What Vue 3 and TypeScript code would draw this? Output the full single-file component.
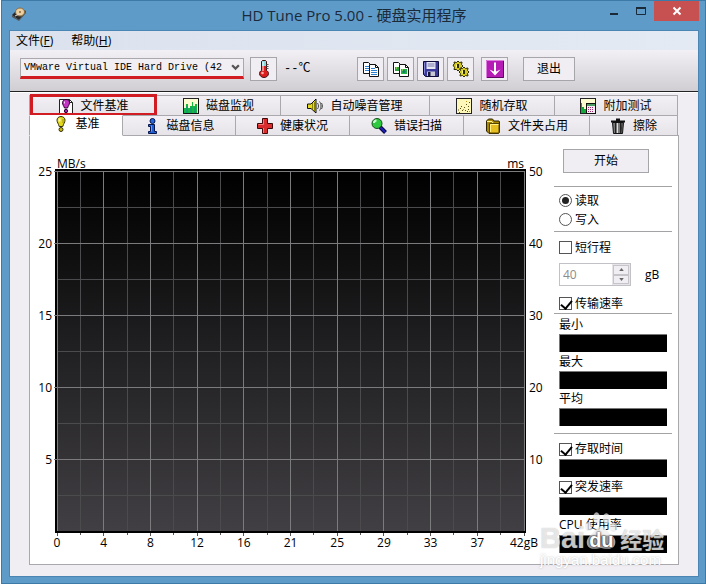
<script setup lang="ts">
import { ref } from 'vue'

interface Tab {
  label: string
  icon: string
  weight: number
  active?: boolean
  marked?: boolean
}

interface Tool {
  name: string
  icon: string
}

const icons: Record<string, string> = {
  fileBench:
    '<path d="M1.500 1.500h10l3 3v11h-13z" fill="#fff" stroke="#222"/><path d="M11.500 1.500v3h3" fill="none" stroke="#222"/><path d="M8 1.500c2.200 0 3.500 1.500 3.500 3.200 0 2-1.500 3.600-2 5.300h-3c-.5-1.700-2-3.300-2-5.300C4.500 3 5.800 1.500 8 1.500z" fill="#c433c4" stroke="#300030"/><path d="M6.500 3.500v2" stroke="#fbd0ff"/><circle cx="8" cy="13" r="1.700" fill="#a020a8" stroke="#300030"/>',
  monitor:
    '<rect x=".5" y=".5" width="15" height="15" fill="#fdfbd0" stroke="#222"/><path d="M1 10h2V6h2v4h2v-2h2V4h1v4h2V6h2v9H1z" fill="#14b83c"/><path d="M4 8v7M8 9v6M12 9v6" stroke="#1582a0"/><path d="M1 15.500h15M15.500 1v14" stroke="#111"/>',
  speaker:
    '<path d="M.5 6h3.500L9 1v14L4 10.500H.5z" fill="#e8dc20" stroke="#111"/><path d="M5.500 5v6M7.500 4v9" stroke="#8a8000"/><path d="M10.500 5c1.300 1.700 1.300 4.300 0 6M12.500 3.500c2 2.500 2 6.500 0 9M14.500 5c1.200 2 1.200 4 0 6" fill="none" stroke="#444"/>',
  random:
    '<rect x=".5" y=".5" width="15" height="15" fill="#fdf7ba" stroke="#222"/><path d="M2 12h1M4 10.500h1M6 12.500h1M5 8.500h1M8 9.500h1M9 12.500h1M10 6.500h1M12 8.500h1M13 4.500h1M12 11.500h1M3 14.500h1M11 13.500h1" stroke="#59501a"/><path d="M10 3.500h1M7 11.500h1M13 13.500h1" stroke="#c99b22"/>',
  extra:
    '<rect x=".5" y=".5" width="15" height="15" fill="#fdfbd0" stroke="#222"/><path d="M1 5h1v4h2v2h2v4H1z" fill="#14a83c"/><rect x="6.500" y="5.500" width="9" height="10" fill="#f8eef4" stroke="#111"/><path d="M7 7h8" stroke="#4c9b62" stroke-width="2"/><path d="M8 9.500h1m1 0h1m1 0h1M8 11.500h1m1 0h1m1 0h1M8 13.500h1m1 0h1m1 0h1" stroke="#a02870"/>',
  bulb:
    '<path d="M8 .5c2.500 0 4 1.700 4 3.700 0 2.300-1.600 3.500-2.200 6.300H6.200C5.600 7.700 4 6.500 4 4.200 4 2.200 5.500.5 8 .5z" fill="#e4d81c" stroke="#33300a"/><path d="M6.500 2.500v3" stroke="#fffac0" stroke-width="2"/><path d="M10 3v4" stroke="#9d9300"/><circle cx="8" cy="13.500" r="2" fill="#c9bd10" stroke="#33300a"/>',
  info:
    '<circle cx="8.500" cy="3" r="2.500" fill="#2468dc" stroke="#07154a"/><path d="M4.500 6.500h6v7h2v2h-8v-2h2v-5h-2z" fill="#1e5ed2" stroke="#07154a"/><path d="M7.500 7.500v6" stroke="#69a5ff"/>',
  health:
    '<path d="M5.500.5h5v5h5v5h-5v5h-5v-5h-5v-5h5z" fill="#d92c2c" stroke="#3f0808"/><path d="M6.500 1.500v5h-5M6.500 10v5" fill="none" stroke="#f57b72"/>',
  scan:
    '<path d="M9 9l5.500 5.500" stroke="#06063f" stroke-width="4"/><path d="M9.500 9.500l4.500 4.500" stroke="#2222b8" stroke-width="2"/><circle cx="6" cy="5.500" r="5" fill="#2fc93f" stroke="#174c1d"/><path d="M3 5c0-1.500 1-2.500 2.500-2.500" fill="none" stroke="#c9ffd0" stroke-width="2"/>',
  folder:
    '<path d="M1.500 3l2-2h4l1.500 2h5l.5 1v10l-1 1.500H4L1.500 13z" fill="#a98800" stroke="#2e2500"/><path d="M2 3.500h5l1 1.500" fill="none" stroke="#fff3a0"/><path d="M4.500 5.500h9.500v9.500H4.500z" fill="#e8bf20" stroke="#564500"/><path d="M5.500 14V6.500h8" fill="none" stroke="#fff08a"/>',
  trash:
    '<path d="M2.500 4.500h11l-1 11h-9z" fill="#777" stroke="#111"/><path d="M1 3.500h14M6 1.500h4" stroke="#111" stroke-width="2"/><path d="M5.500 5v10M10.500 5v10" stroke="#222"/><path d="M7.500 5v10" stroke="#ddd"/><path d="M12 5l-1 10" stroke="#333"/>',
  copyText:
    '<path d="M.5 1.500h5l2 2v9h-7z" fill="#fff" stroke="#111"/><path d="M2 5.500h4M2 7.500h4M2 9.500h4" stroke="#2c80d0"/><path d="M6.500 3.500h6l3 3v9h-9z" fill="#fff" stroke="#111"/><path d="M12.500 3.500v3h3" fill="none" stroke="#111"/><path d="M8 7.500h4M8 9.500h6M8 11.500h6M8 13.500h6" stroke="#2c80d0"/>',
  copyImage:
    '<path d="M.5 1.500h5l2 2v9h-7z" fill="#fff" stroke="#111"/><path d="M2 6h4v4H2z" fill="#29a43f"/><path d="M6.500 3.500h6l3 3v9h-9z" fill="#fff" stroke="#111"/><path d="M12.500 3.500v3h3" fill="none" stroke="#111"/><path d="M8 8h6v5H8z" fill="#23b543"/><circle cx="11" cy="10.500" r="1.500" fill="#187a6b"/><path d="M3 7h1M9 9h1" stroke="#d3ef60"/>',
  save:
    '<path d="M.5.500h15v15h-13l-2-2z" fill="#3a3a9c" stroke="#0c0c38"/><path d="M3.500 1h9v7h-9z" fill="#e6e6f4"/><path d="M4.500 3h7M4.500 5h7" stroke="#7777a8"/><path d="M4 10.500h8V15H4z" fill="#c7c7d6"/><path d="M5 11h2.500v4H5z" fill="#16163a"/><path d="M1.500 1.500v11" stroke="#8585d8"/>',
  gears:
    '<path d="M0 4l1.500-1L1 1l2.500.5L5 0l1.500 1.500L9 1l-.5 2.500L10 5 8.500 6.500 9 9l-2.500-.5L5 10 3.500 8.500 1 8.500 1.500 6.500z" fill="#d6cb1c" stroke="#2f2b00"/><path d="M6 11l1.500-1.500L7 7l2.500.5L11 6l1.500 1.500 2.500-.5-.5 2.500L16 11l-1.500 1.500.5 2.500-2.500-.5L11 16l-1.500-1.500L7 15l.5-2.500z" fill="#d6cb1c" stroke="#2f2b00"/><path d="M5 3v4M11 9v4" stroke="#2f2b00" stroke-width="2"/><path d="M3.500 3.500v3M9.500 9.500v3" stroke="#fff88a"/>',
  download:
    '<path d="M-1-1h18v18H-1z" fill="#b51bb5"/><path d="M-.500 17V-.500H17" fill="none" stroke="#dc7edc"/><path d="M16.500 0v16.500H0" fill="none" stroke="#5f0762"/><path d="M8 1.500v11" stroke="#fff" stroke-width="2"/><path d="M2.500 8.500L8 14.500l5.500-6L8 11z" fill="#fff"/>',
  thermometer:
    '<path d="M5.500.500l1-1h3l1 1v9c1.300.8 2 1.600 2 3 0 2.200-2 4-4.500 4s-4.500-1.800-4.500-4c0-1.400.7-2.200 2-3z" fill="#dd1d1d" stroke="#3a1414"/><path d="M6 0h4v5H6z" fill="#8ed9e0"/><path d="M7 1v9" stroke="#fff"/><path d="M10.500 3.500h2M10.500 5.500h2M10.500 7.500h2" stroke="#555"/><circle cx="6.500" cy="12" r="1.300" fill="#ffb0a8"/>',
}

const topTabs: Tab[] = [
  { label: '文件基准', icon: 'fileBench', weight: 127, marked: true },
  { label: '磁盘监视', icon: 'monitor', weight: 124 },
  { label: '自动噪音管理', icon: 'speaker', weight: 149 },
  { label: '随机存取', icon: 'random', weight: 125 },
  { label: '附加测试', icon: 'extra', weight: 123 },
]

const bottomTabs: Tab[] = [
  { label: '基准', icon: 'bulb', weight: 93, active: true },
  { label: '磁盘信息', icon: 'info', weight: 113 },
  { label: '健康状况', icon: 'health', weight: 114 },
  { label: '错误扫描', icon: 'scan', weight: 114 },
  { label: '文件夹占用', icon: 'folder', weight: 126 },
  { label: '擦除', icon: 'trash', weight: 88 },
]

const tools: Tool[] = [
  { name: '复制文本', icon: 'copyText' },
  { name: '复制图像', icon: 'copyImage' },
  { name: '保存', icon: 'save' },
  { name: '选项', icon: 'gears' },
]

const speedLabels = ['25', '20', '15', '10', '5']
const timeLabels = ['50', '40', '30', '20', '10']
const sizeLabels = ['0', '4', '8', '12', '16', '21', '25', '29', '33', '37', '42gB']
const columns = Array.from({ length: 21 }, (_, i) => ({ at: `${i * 5}%`, major: i % 2 === 0 }))
const rows = Array.from({ length: 10 }, (_, i) => ({ at: `${i * 10}%`, major: i % 2 === 0 }))

const mode = ref('read')
const shortStroke = ref(false)
const strokeSize = ref('40')
const transferRate = ref(true)
const accessTime = ref(true)
const burstRate = ref(true)
</script>

<template>
  <div class="window">
    <header class="titlebar">
      <svg class="app-icon" viewBox="0 0 16 16" aria-hidden="true">
        <path d="M1 9l7-7 7 3-7 9z" fill="#2c2a28" />
        <path d="M1 9l7 5v1L1 11zM8 14l7-9v2l-7 8z" fill="#555" />
        <ellipse cx="9" cy="6" rx="4.500" ry="4" fill="#eccf9f" stroke="#8b6c40" />
        <circle cx="9" cy="6" r="1" fill="#8a6a48" />
        <path d="M4 10l4-2" stroke="#ddd" />
      </svg>
      <h1>HD Tune Pro 5.00 - 硬盘实用程序</h1>
      <div class="controls">
        <button type="button" aria-label="最小化">
          <svg viewBox="0 0 12 12"><path d="M2 9h8" stroke="#1b2a38" stroke-width="2" /></svg>
        </button>
        <button type="button" aria-label="最大化">
          <svg viewBox="0 0 12 12"><path d="M1.500 3h9v6.500h-9z" fill="none" stroke="#1b2a38" /><path d="M1 3h10" stroke="#1b2a38" stroke-width="2" /></svg>
        </button>
        <button type="button" class="close" aria-label="关闭">
          <svg viewBox="0 0 12 12"><path d="M2.500 2.500l7 7M9.500 2.500l-7 7" stroke="#fff" stroke-width="2" /></svg>
        </button>
      </div>
    </header>

    <main class="client">
      <nav class="menubar">
        <button type="button">文件(<u>F</u>)</button>
        <button type="button">帮助(<u>H</u>)</button>
      </nav>

      <div class="toolbar">
        <div class="drive">
          <select aria-label="硬盘">
            <option>VMware Virtual IDE Hard Drive (42</option>
          </select>
          <svg viewBox="0 0 8 8" aria-hidden="true"><path d="M1 2l3 3 3-3" fill="none" stroke="#555" stroke-width="2" /></svg>
        </div>
        <button type="button" class="tool" aria-label="温度">
          <svg class="icon" viewBox="0 0 16 16" v-html="icons.thermometer"></svg>
        </button>
        <span class="temperature">--℃</span>
        <div class="tool-group">
          <button v-for="tool in tools" :key="tool.icon" type="button" class="tool" :aria-label="tool.name">
            <svg class="icon" viewBox="0 0 16 16" v-html="icons[tool.icon]"></svg>
          </button>
        </div>
        <button type="button" class="tool" aria-label="下载">
          <svg class="icon" viewBox="0 0 16 16" v-html="icons.download"></svg>
        </button>
        <button type="button" class="tool exit">退出</button>
      </div>

      <div class="body">
        <div class="tabs">
          <div class="tab-row">
            <button
              v-for="tab in topTabs"
              :key="tab.label"
              type="button"
              class="tab"
              :class="{ marked: tab.marked }"
              :style="{ flexGrow: tab.weight }"
            >
              <svg class="icon" viewBox="0 0 16 16" v-html="icons[tab.icon]"></svg>{{ tab.label }}
            </button>
          </div>
          <div class="tab-row">
            <button
              v-for="tab in bottomTabs"
              :key="tab.label"
              type="button"
              class="tab"
              :class="{ active: tab.active }"
              :style="{ flexGrow: tab.weight }"
            >
              <svg class="icon" viewBox="0 0 16 16" v-html="icons[tab.icon]"></svg>{{ tab.label }}
            </button>
          </div>
        </div>

        <section class="panel">
          <div class="chart">
            <div class="plot">
              <svg class="grid">
                <g class="minor">
                  <template v-for="c in columns" :key="c.at">
                    <line v-if="!c.major" :x1="c.at" :x2="c.at" y1="0" y2="100%" />
                  </template>
                  <template v-for="r in rows" :key="r.at">
                    <line v-if="!r.major" x1="0" x2="100%" :y1="r.at" :y2="r.at" />
                  </template>
                </g>
                <g class="major">
                  <template v-for="c in columns" :key="c.at">
                    <line v-if="c.major" :x1="c.at" :x2="c.at" y1="0" y2="100%" />
                  </template>
                  <template v-for="r in rows" :key="r.at">
                    <line v-if="r.major" x1="-3" x2="100%" :y1="r.at" :y2="r.at" />
                  </template>
                </g>
                <svg y="100%" class="ticks">
                  <line v-for="c in columns" :key="c.at" :x1="c.at" :x2="c.at" y1="2" :y2="c.major ? 5 : 4" />
                </svg>
                <text x="0" y="-3">MB/s</text>
                <text x="100%" y="-3" class="end">ms</text>
                <text v-for="(t, i) in speedLabels" :key="'s' + t" x="-5" :y="`${i * 20}%`" dy="5" class="end">{{ t }}</text>
                <svg x="100%" class="ticks">
                  <text v-for="(t, i) in timeLabels" :key="'t' + t" x="5" :y="`${i * 20}%`" dy="5">{{ t }}</text>
                </svg>
                <text v-for="(t, i) in sizeLabels" :key="'x' + t" :x="`${i * 10}%`" y="100%" dy="16" class="mid">{{ t }}</text>
              </svg>
            </div>
          </div>

          <aside class="side">
            <button type="button" class="start">开始</button>
            <hr />
            <div class="modes">
              <label class="option"><input v-model="mode" type="radio" name="mode" value="read" />读取</label>
              <label class="option"><input v-model="mode" type="radio" name="mode" value="write" />写入</label>
            </div>
            <hr />
            <div class="stroke">
              <label class="option"><input v-model="shortStroke" type="checkbox" />短行程</label>
              <div class="size">
                <div class="spinner">
                  <input id="stroke-size" v-model="strokeSize" type="text" disabled />
                  <div class="arrows">
                    <button type="button" aria-label="增加" disabled><svg viewBox="0 0 6 4"><path d="M0 4l3-4 3 4z" /></svg></button>
                    <button type="button" aria-label="减少" disabled><svg viewBox="0 0 6 4"><path d="M0 0l3 4 3-4z" /></svg></button>
                  </div>
                </div>
                <label for="stroke-size">gB</label>
              </div>
              <label class="option"><input v-model="transferRate" type="checkbox" />传输速率</label>
            </div>
            <hr />
            <div class="readings">
              <p>最小</p>
              <div class="value"></div>
              <p>最大</p>
              <div class="value"></div>
              <p>平均</p>
              <div class="value"></div>
            </div>
            <hr />
            <div class="readings extra">
              <label class="option"><input v-model="accessTime" type="checkbox" />存取时间</label>
              <div class="value"></div>
              <label class="option"><input v-model="burstRate" type="checkbox" />突发速率</label>
              <div class="value"></div>
              <p>CPU 使用率</p>
              <div class="value"></div>
            </div>
            <div class="watermark">
              <div class="brand">
                <span>Bai</span>
                <span class="paw">
                  <svg viewBox="0 0 36 42" aria-hidden="true">
                    <ellipse cx="4" cy="16" rx="4" ry="5" />
                    <ellipse cx="13" cy="6" rx="4" ry="6" />
                    <ellipse cx="24" cy="7" rx="4" ry="6" />
                    <ellipse cx="32" cy="17" rx="4" ry="5" />
                    <path d="M18 16c5 0 6 5 10 8s7 6 6 11-5 6-9 6-5-1-7-1-4 1-8 1-8-2-8-7 3-7 6-10 5-8 10-8z" />
                  </svg>
                  <b>du</b>
                </span>
                <span class="cn">经验</span>
              </div>
              <div class="site">jingyan.baidu.com</div>
            </div>
          </aside>
        </section>
      </div>
    </main>
  </div>
</template>

<style>
body {
  margin: 0;
  background: #fff;
}
</style>

<style scoped>
* {
  box-sizing: border-box;
}

.window {
  margin: 0 0 0 1px;
  padding: 0 6px 6px 7px;
  border: 1px solid #3d7aa8;
  background: #5f9bc9;
  font: 12px/16px 'Open Sans', 'Noto Sans CJK SC', sans-serif;
  color: #000;
}

button {
  font: inherit;
  color: inherit;
  padding: 0;
  margin: 0;
}

.titlebar {
  display: grid;
  grid-template-columns: 1fr auto 1fr;
  height: 29px;
}

.app-icon {
  width: 16px;
  height: 16px;
  margin: 5px 0 0 2px;
}

.titlebar h1 {
  margin: 3px 0 0;
  font-size: 15px;
  line-height: 22px;
  font-weight: 400;
  color: #1b2a38;
  white-space: nowrap;
}

.controls {
  display: flex;
  justify-content: flex-end;
}

.controls button {
  display: flex;
  align-items: center;
  justify-content: center;
  width: 27px;
  height: 20px;
  border: 0;
  background: none;
}

.controls svg {
  width: 12px;
  height: 12px;
}

.controls .close {
  width: 45px;
  background: #c75050;
}

.client {
  border: 1px solid #4a85b3;
  background: #f0eef2;
}

.menubar {
  display: flex;
  gap: 18px;
  height: 19px;
  padding: 0 6px;
  background: linear-gradient(90deg, #dbe2ee, #e4eaf3);
}

.menubar button {
  border: 0;
  background: none;
}

.toolbar {
  display: flex;
  height: 42px;
  padding: 7px 10px 0;
  border-bottom: 1px solid #222;
  background: linear-gradient(#f2f0f4, #d0ced2);
}

.drive {
  display: flex;
  align-items: center;
  flex: 0 1 224px;
  height: 21px;
  margin: 1px 6px 0 0;
  border: 1px solid #a9a9ad;
  border-bottom: 3px solid #d01c22;
  background: #f1eff3;
}

.drive select {
  flex: 1;
  min-width: 0;
  height: 17px;
  padding: 0 0 0 3px;
  border: 0;
  appearance: none;
  background: none;
  font: 10px/17px 'Liberation Mono', monospace;
  color: #000;
}

.drive svg {
  width: 9px;
  height: 9px;
  margin-right: 3px;
}

.tool {
  display: flex;
  flex: none;
  align-items: center;
  justify-content: center;
  width: 27px;
  height: 24px;
  border: 1px solid #a6a5aa;
  background: #f0eef2;
}

.tool-group {
  display: flex;
  gap: 3px;
  margin-right: 7px;
}

.icon {
  flex: none;
  width: 16px;
  height: 16px;
  overflow: visible;
}

.temperature {
  width: 80px;
  padding-left: 7px;
  font-family: 'Liberation Mono', 'Noto Sans CJK SC', monospace;
  line-height: 24px;
}

.exit {
  width: 52px;
  margin-left: 15px;
}

.body {
  padding: 2px 19px 11px 19px;
  border-top: 1px solid #fff;
}

.tabs {
  padding-right: 1px;
}

.tab-row {
  display: flex;
}

.tab {
  position: relative;
  display: flex;
  flex: 1 1 0;
  align-items: center;
  justify-content: center;
  gap: 7px;
  height: 20px;
  border: 1px solid #a9a8ad;
  border-width: 1px 1px 0 0;
  background: linear-gradient(#f2f0f4, #e6e4e8);
  white-space: nowrap;
}

.tab:first-child {
  border-left-width: 1px;
}

.tab.active {
  border-top-color: #fff;
  background: #fff;
  padding-bottom: 4px;
}

.tab.marked::after {
  content: '';
  position: absolute;
  inset: -2px -1px -1px 0;
  border: 3px solid #d01c22;
}

.panel {
  display: flex;
  border: 1px solid #a9a8ad;
  background: #fff;
}

.tab-row:last-child {
  position: relative;
  margin-bottom: -1px;
}

.tab-row:last-child .tab {
  height: 21px;
  border-bottom-width: 1px;
}

.tab-row:last-child .tab.active {
  border-bottom-color: #fff;
}

.chart {
  display: flex;
  flex: 1;
  padding: 33px 28px 31px 25px;
}

.plot {
  display: flex;
  flex: 1;
  padding: 2px;
  background: #000;
}

.grid {
  flex: 1;
  width: 100%;
  height: auto;
  overflow: visible;
  background: linear-gradient(#000, #413f43);
}

.grid line {
  shape-rendering: crispEdges;
}

.minor line {
  stroke: #4b4a4d;
}

.major line {
  stroke: #7b7a7d;
}

.ticks {
  overflow: visible;
}

.ticks line {
  stroke: #555;
}

.end {
  text-anchor: end;
}

.mid {
  text-anchor: middle;
}

.side {
  position: relative;
  flex: none;
  width: 124px;
  padding: 13px 6px 11px 0;
}

.side hr {
  margin: 0;
  border: 0;
  border-top: 1px solid #a3a3a6;
}

.start {
  display: block;
  width: 86px;
  height: 24px;
  margin: 0 0 13px 9px;
  border: 1px solid #a6a5aa;
  background: #f0eef2;
}

.modes {
  padding: 4px 5px 2px;
}

.option {
  display: flex;
  align-items: center;
  gap: 3px;
  height: 19px;
}

.option input {
  position: relative;
  flex: none;
  width: 13px;
  height: 13px;
  margin: 0;
  appearance: none;
  border: 1px solid #555;
  background: #fff;
}

.option input[type='radio'] {
  border-radius: 50%;
}

.option input[type='radio']:checked::after {
  content: '';
  position: absolute;
  inset: 2px;
  border-radius: 50%;
  background: #222;
}

.option input[type='checkbox']:checked::after {
  content: '';
  position: absolute;
  left: 3px;
  top: 0;
  width: 5px;
  height: 9px;
  border: solid #000;
  border-width: 0 2px 2px 0;
  transform: rotate(40deg);
}

.stroke {
  padding: 6px 5px 0;
}

.size {
  display: flex;
  align-items: center;
  gap: 14px;
  margin: 6px 0 8px;
}

.spinner {
  display: flex;
  width: 72px;
  height: 23px;
  border: 1px solid #c2c1c5;
}

.spinner input {
  flex: 1;
  min-width: 0;
  padding: 0 3px;
  border: 0;
  background: #fff;
  font: inherit;
  color: #8b8b8b;
}

.arrows {
  display: flex;
  flex-direction: column;
  width: 18px;
  padding: 1px;
  background: #e6e4e8;
}

.arrows button {
  display: flex;
  flex: 1;
  align-items: center;
  justify-content: center;
  border: 1px solid #c6c4c9;
  background: #f0eef2;
}

.arrows svg {
  width: 5px;
  height: 3px;
  fill: #666;
}

.readings {
  padding: 1px 5px 7px;
}

.readings p {
  margin: 0;
  line-height: 19px;
}

.readings.extra {
  padding: 5px 5px 0;
}

.extra .option,
.extra p {
  height: 20px;
}

.value {
  height: 18px;
  border: 1px solid #777;
  border-width: 1px 0 0 1px;
  background: #000;
}

.watermark {
  position: absolute;
  left: -14px;
  bottom: -4px;
  width: 128px;
  color: rgba(255, 255, 255, 0.7);
  text-shadow: 0 0 1px rgba(120, 120, 120, 0.6);
  pointer-events: none;
}

.brand {
  display: flex;
  align-items: flex-end;
  font: 700 29px/28px 'Liberation Sans', sans-serif;
}

.paw {
  position: relative;
  width: 32px;
  height: 42px;
  margin-right: 3px;
}

.paw svg {
  width: 32px;
  height: 42px;
  fill: rgba(235, 235, 235, 0.7);
}

.paw b {
  position: absolute;
  left: 4px;
  bottom: 0;
  font-size: 20px;
  line-height: 24px;
  color: #fff;
  text-shadow: 0 0 2px #333, 0 0 2px #333;
}

.brand .cn {
  font: 700 22px/28px 'Noto Sans CJK SC', sans-serif;
}

.site {
  font: 15px/16px 'Liberation Sans', sans-serif;
  color: #fff;
  text-shadow: 0 0 2px rgba(120, 120, 120, 0.5);
}
</style>
